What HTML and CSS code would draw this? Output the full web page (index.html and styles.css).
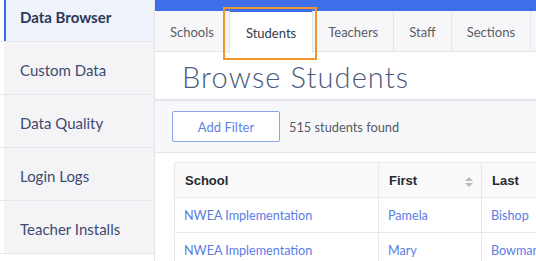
FILE: index.html
```html
<!DOCTYPE html>
<html lang="en">

<head>
    <meta charset="UTF-8">
    <meta name="viewport" content="width=device-width, initial-scale=1.0">
    <title>Browse Students</title>
    <link rel="stylesheet" href="styles.css">
</head>

<body>
    <div class="sidebar">
        <ul class="nav">
            <li><a class="active" href="#">Data Browser</a></li>
            <li><a href="#">Custom Data</a></li>
            <li><a href="#">Data Quality</a></li>
            <li><a href="#">Login Logs</a></li>
            <li><a href="#">Teacher Installs</a></li>
        </ul>
    </div>

    <div class="main">
        <div class="topbar"></div>
        <div class="tabs">
            <a class="tab" href="#">Schools</a>
            <a class="tab active" href="#">Students</a>
            <a class="tab" href="#">Teachers</a>
            <a class="tab" href="#">Staff</a>
            <a class="tab" href="#">Sections</a>
        </div>

        <h1 class="title">Browse Students</h1>

        <div class="filters">
            <button class="add-btn">Add Filter</button>
            <span class="count">515 students found</span>
        </div>

        <div class="results">
            <table>
                <thead>
                    <tr>
                        <th class="col-school">School</th>
                        <th class="col-first">First <span class="sort"></span></th>
                        <th>Last</th>
                    </tr>
                </thead>
                <tbody>
                    <tr>
                        <td><a href="#">NWEA Implementation</a></td>
                        <td><a href="#">Pamela</a></td>
                        <td><a href="#">Bishop</a></td>
                    </tr>
                    <tr>
                        <td><a href="#">NWEA Implementation</a></td>
                        <td><a href="#">Mary</a></td>
                        <td><a href="#">Bowman</a></td>
                    </tr>
                </tbody>
            </table>
        </div>
    </div>

    <div class="highlight"></div>
</body>

</html>
```

FILE: styles.css
```css
body {
    margin: 0;
    display: flex;
    height: 261px;
    overflow: hidden;
    font-family: Lato, "Open Sans", sans-serif;
    background: white;
}

.sidebar {
    width: 154px;
    flex-shrink: 0;
    border-right: 1px solid #e3e4e8;
    background: white;
}

.nav {
    list-style: none;
    margin: -11px 0 0 0;
    padding: 0;
}

.nav li {
    border-bottom: 1px solid #e6e7eb;
}

.nav a {
    display: block;
    margin-left: 4px;
    padding: 19px 0 15px 16px;
    line-height: 18px;
    font-size: 15px;
    color: #3e4a72;
    text-decoration: none;
    background: #f4f4f6;
}

.nav a.active {
    padding-left: 14px;
    border-left: 2px solid #3c6ae6;
    background: #eff3fc;
    font-weight: bold;
    color: #2c3858;
}

.main {
    flex: 1;
    min-width: 0;
    overflow: hidden;
}

.topbar {
    height: 11px;
    background: #3f6fe8;
}

.tabs {
    display: flex;
    height: 40px;
    background: #f7f7f9;
    border-bottom: 1px solid #e4e5e9;
}

.tab {
    flex-shrink: 0;
    padding: 0 15px;
    line-height: 43px;
    font-size: 13px;
    color: #5a5d66;
    text-decoration: none;
    border-right: 1px solid #e6e7eb;
}

.tab:first-child {
    border-right: none;
}

.tab.active {
    margin-top: -1px;
    padding: 0 16px;
    line-height: 42px;
    height: 41px;
    background: white;
    color: #333a48;
    border-top: 2px solid #3f6fe8;
    border-left: 1px solid #e1e2e6;
    border-right: 1px solid #e1e2e6;
}

.title {
    margin: 0;
    padding: 7px 0 0 27px;
    height: 40px;
    font-size: 29px;
    font-weight: 300;
    letter-spacing: 1.1px;
    color: #4a5a7c;
    border-bottom: 2px solid #e3e5ea;
}

.filters {
    display: flex;
    align-items: center;
    gap: 9px;
    height: 51px;
    padding-left: 17px;
    background: #f8f8fb;
    border-bottom: 1px solid #e6e7eb;
}

.add-btn {
    width: 108px;
    height: 31px;
    border: 1px solid #8aa5ef;
    border-radius: 2px;
    background: white;
    color: #5f82e6;
    font-family: Lato, sans-serif;
    font-size: 13px;
    cursor: pointer;
}

.count {
    font-size: 12.8px;
    color: #555a63;
}

.results {
    padding: 9px 0 0 19px;
}

table {
    width: 440px;
    border-collapse: collapse;
}

th,
td {
    height: 34px;
    padding: 0 10px;
    text-align: left;
    border: 1px solid #e8e9ec;
}

th {
    background: #fafafb;
    font-family: "Liberation Sans", Arial, sans-serif;
    font-size: 13px;
    font-weight: bold;
    color: #262a30;
}

.col-school {
    width: 183px;
}

.col-first {
    width: 82px;
    position: relative;
}

.sort {
    position: absolute;
    right: 8px;
    top: 14px;
    width: 0;
    height: 0;
    border-left: 4px solid transparent;
    border-right: 4px solid transparent;
    border-bottom: 4px solid #b8bbc2;
}

.sort::after {
    content: "";
    position: absolute;
    left: -4px;
    top: 6px;
    border-left: 4px solid transparent;
    border-right: 4px solid transparent;
    border-top: 4px solid #b8bbc2;
}

td {
    padding-left: 9px;
    font-size: 12.6px;
}

td a {
    color: #5a7de4;
    text-decoration: none;
}

.highlight {
    position: absolute;
    left: 223px;
    top: 7px;
    width: 90px;
    height: 49px;
    border: 2px solid #f0952c;
}
```
